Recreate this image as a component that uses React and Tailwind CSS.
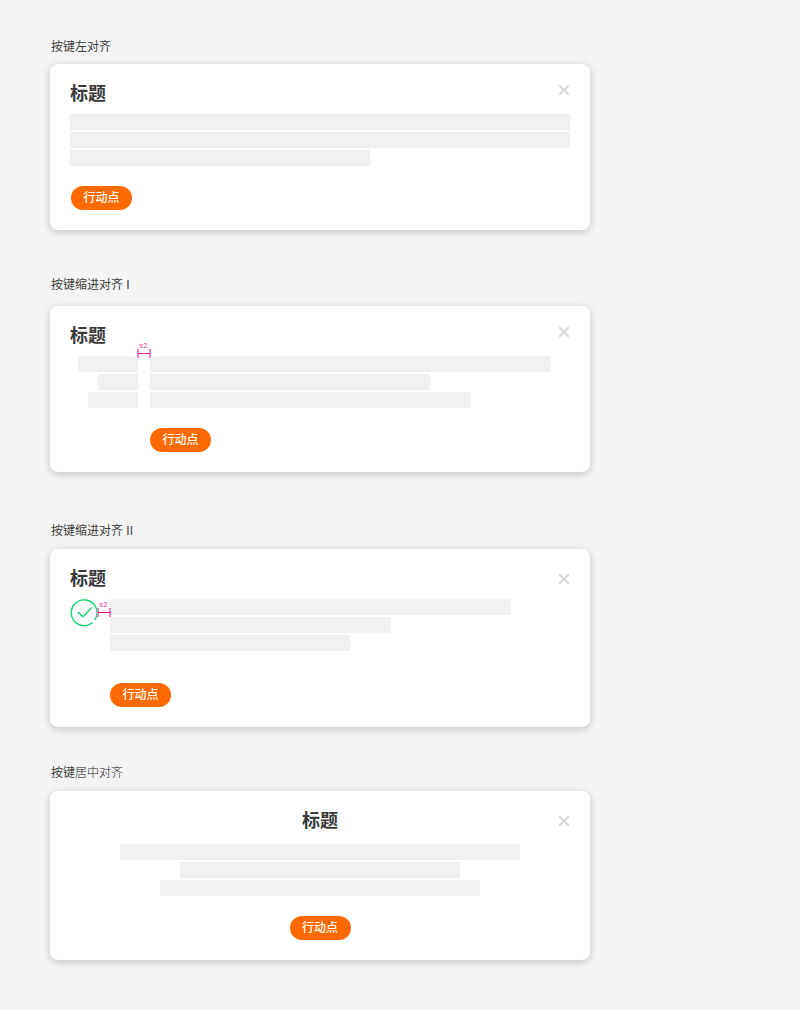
import React from "react";

function Bar({ className }) {
  return <div className={`h-4 max-w-full bg-[#f1f1f1] ${className}`} />;
}

function CloseButton({ className }) {
  return (
    <button type="button" aria-label="关闭" className={`block h-3 w-3 shrink-0 cursor-pointer ${className}`}>
      <svg viewBox="0 0 12 12" className="block h-3 w-3" fill="none" stroke="#d8d8d8" strokeWidth="2">
        <path d="M1.2 1.2 10.8 10.8M10.8 1.2 1.2 10.8" />
      </svg>
    </button>
  );
}

function ActionButton({ className = "" }) {
  return (
    <button
      type="button"
      className={`block h-6 w-[61px] cursor-pointer rounded-full bg-[#ff6a00] text-center text-[12px] leading-6 font-medium whitespace-nowrap text-white ${className}`}
    >
      行动点
    </button>
  );
}

function Title() {
  return <h2 className="text-[18px] leading-5 font-bold text-[#3a3a3a]">标题</h2>;
}

function Spacing({ className }) {
  return (
    <div className={`absolute w-3 ${className}`}>
      <span className="block pl-px font-['Roboto',sans-serif] text-[8px] leading-[7px] text-[#f23ca6]">s2</span>
      <svg viewBox="0 0 12 9" className="block h-[9px] w-3 overflow-visible" fill="none">
        <path d="M0 0V9M12 0V9" stroke="#f57fc2" strokeWidth="2" />
        <path d="M0 4.5H12" stroke="#e0148c" strokeWidth="1" />
      </svg>
    </div>
  );
}

function SuccessIcon() {
  return (
    <svg
      viewBox="0 0 28 28"
      className="block h-7 w-7 shrink-0"
      fill="none"
      stroke="#14d66f"
      strokeWidth="1.4"
      strokeLinecap="round"
      aria-hidden="true"
    >
      <path d="M22 24A12.9 12.9 0 1 1 25.2 20.4" />
      <path d="M8.2 13.4 13.2 17.8 21.2 9" />
    </svg>
  );
}

function Card({ children }) {
  return (
    <div className="w-full max-w-[540px] rounded-lg bg-white p-5 shadow-[0_2px_8px_rgba(0,0,0,0.2)]">
      {children}
    </div>
  );
}

function Label({ children }) {
  return <p className="pl-px text-[12px] leading-4 text-[#3d3d3d]">{children}</p>;
}

export default function App() {
  return (
    <main
      lang="zh-CN"
      className="min-h-screen bg-[#f4f4f4] px-[50px] pt-[39px] pb-[50px] font-['Liberation_Sans','Noto_Sans_CJK_SC',sans-serif]"
    >
      <section className="flex flex-col gap-[9px]">
        <Label>按键左对齐</Label>
        <Card>
          <header className="flex justify-between">
            <Title />
            <CloseButton className="self-start" />
          </header>
          <div className="mt-[10px] flex flex-col gap-0.5">
            <Bar className="w-full" />
            <Bar className="w-full" />
            <Bar className="w-[300px]" />
          </div>
          <ActionButton className="mt-5 ml-px" />
        </Card>
      </section>

      <section className="mt-[47px] flex flex-col gap-[13px]">
        <Label>按键缩进对齐 I</Label>
        <Card>
          <header className="flex justify-between">
            <Title />
            <CloseButton className="self-start" />
          </header>
          <div className="mt-[10px] flex gap-3">
            <div className="relative flex w-[68px] shrink-0 flex-col items-end gap-0.5">
              <Bar className="w-[60px]" />
              <Bar className="w-10" />
              <Bar className="w-[50px]" />
              <Spacing className="-top-[14px] left-full" />
            </div>
            <div className="min-w-0 flex-1">
              <div className="flex flex-col gap-0.5">
                <Bar className="w-[400px]" />
                <Bar className="w-[280px]" />
                <Bar className="w-[320px]" />
              </div>
              <ActionButton className="mt-5" />
            </div>
          </div>
        </Card>
      </section>

      <section className="mt-[51px] flex flex-col gap-[10px]">
        <Label>按键缩进对齐 II</Label>
        <Card>
          <header className="flex justify-between">
            <Title />
            <CloseButton className="self-center" />
          </header>
          <div className="mt-[10px] flex gap-3">
            <div className="relative shrink-0">
              <SuccessIcon />
              <Spacing className="top-0.5 left-full" />
            </div>
            <div className="min-w-0 flex-1">
              <div className="flex flex-col gap-0.5">
                <Bar className="w-[400px]" />
                <Bar className="w-[280px]" />
                <Bar className="w-60" />
              </div>
              <ActionButton className="mt-8" />
            </div>
          </div>
        </Card>
      </section>

      <section className="mt-[38px] flex flex-col gap-[10px]">
        <Label>
          按键<span className="font-light text-[#222222]">居中对齐</span>
        </Label>
        <Card>
          <header className="grid grid-cols-[12px_1fr_12px] text-center">
            <span />
            <Title />
            <CloseButton className="self-center" />
          </header>
          <div className="mt-[13px] flex flex-col items-center gap-0.5">
            <Bar className="w-[400px]" />
            <Bar className="w-[280px]" />
            <Bar className="w-[320px]" />
          </div>
          <ActionButton className="mx-auto mt-5" />
        </Card>
      </section>
    </main>
  );
}
